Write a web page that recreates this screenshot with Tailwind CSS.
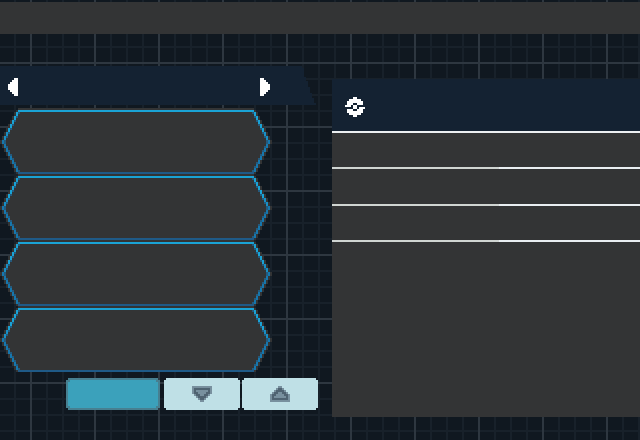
<!DOCTYPE html>
<html lang="en">
<head>
<meta charset="utf-8">
<title>Panels</title>
<script src="https://cdn.jsdelivr.net/npm/@tailwindcss/browser@4"></script>
</head>
<body class="w-[640px] h-[440px] overflow-hidden bg-[#101820]">
<div class="relative w-[640px] h-[440px] overflow-hidden">
  <svg class="absolute inset-0" width="640" height="440" shape-rendering="crispEdges" aria-hidden="true">
    <defs>
      <pattern id="minor" x="14" y="14" width="16" height="16" patternUnits="userSpaceOnUse"><path d="M0 0h16v2H2v14H0z" fill="#18212a"/></pattern>
      <pattern id="major" x="30" y="62" width="64" height="64" patternUnits="userSpaceOnUse"><path d="M0 0h64v2H2v62H0z" fill="#2e3740"/></pattern>
    </defs>
    <rect width="640" height="440" fill="url(#minor)"/>
    <rect width="640" height="440" fill="url(#major)"/>
  </svg>
  <div class="relative flex flex-col h-full pt-[2px]">
    <header class="h-8 shrink-0 bg-[#333435]"></header>
    <main class="flex flex-1">
      <section class="w-[332px] shrink-0 pt-8 flex flex-col">
        <div class="relative h-[39px] w-[316px] flex items-center">
          <svg class="absolute inset-0" width="316" height="39" shape-rendering="crispEdges"><path d="M0 0H302V2H304V11H306V15H308V21H310V27H312V32H314V37H316V39H0z" fill="#142232"/></svg>
          <button class="relative ml-2 mb-[-3px]" aria-label="Previous"><svg class="block" width="10" height="18" viewBox="0 0 5 9" shape-rendering="crispEdges" fill="#fff"><path d="M3 0H5V9H3V8H2V7H1V6H0V3H1V2H2V1H3z"/></svg></button>
          <button class="relative ml-[242px] mb-[-3px]" aria-label="Next"><svg class="block" width="10" height="18" viewBox="0 0 5 9" shape-rendering="crispEdges" fill="#fff"><path d="M0 0H2V1H3V2H4V3H5V6H4V7H3V8H2V9H0z"/></svg></button>
        </div>
        <div id="slots" class="mt-[3px] flex flex-col h-[264px]"></div>
        <div class="flex mt-[6px] ml-[66px]">
          <button class="block" aria-label="Select"><svg class="block" width="94" height="32" viewBox="0 0 47 16" shape-rendering="crispEdges"><path d="M1 0H46V1H47V15H46V16H1V15H0V1H1z" fill="#477f90"/><path d="M2 1H45V2H46V14H45V15H2V14H1V2H2z" fill="#3ba1bb"/></svg></button>
          <button class="ml-1 block" aria-label="Down"><svg class="block" width="76" height="32" viewBox="0 0 38 16" shape-rendering="crispEdges"><path d="M1 0H37V1H38V15H37V16H1V15H0V1H1z" fill="#bfe0e6"/><g id="tri" transform="translate(14 4)"><path d="M0 0H10V4H9V5H8V6H7V7H6V8H4V7H3V6H2V5H1V4H0z" fill="#78909e"/><path fill-rule="evenodd" d="M1 1H9V4H8V5H7V6H6V7H4V6H3V5H2V4H1zM2 2V3H3V4H4V5H6V4H7V3H8V2z" fill="#4f6371"/></g></svg></button>
          <button class="ml-[2px] block" aria-label="Up"><svg class="block" width="76" height="32" viewBox="0 0 38 16" shape-rendering="crispEdges"><path d="M1 0H37V1H38V15H37V16H1V15H0V1H1z" fill="#bfe0e6"/><use href="#tri" transform="translate(0 16) scale(1 -1)"/></svg></button>
        </div>
      </section>
      <section class="flex-1 mt-[45px] h-[338px] bg-[#333435] flex flex-col">
        <div class="h-[52px] shrink-0 bg-[#142232] pl-[13px] pt-[18px]">
          <svg class="block" width="20" height="20" viewBox="0 0 10 10" shape-rendering="crispEdges" fill="#fff"><path d="M4 0H6V1H8V2H9V4H6V3H4V4H3V5H0V4H1V2H2V1H4zM4 4H6V6H4zM6 10H4V9H2V8H1V6H4V7H6V6H7V5H10V6H9V8H8V9H6z"/></svg>
        </div>
        <div class="h-[2px] shrink-0 bg-[#eceff1]"></div>
        <div class="mt-[34px] h-[2px] shrink-0 flex"><i class="w-[167px] bg-[#d0d5d2]"></i><i class="flex-1 bg-[#e9eef2]"></i></div>
        <div class="mt-[35px] h-[2px] shrink-0 flex"><i class="w-[167px] bg-[#d0d5d2]"></i><i class="flex-1 bg-[#e9eef2]"></i></div>
        <div class="mt-[34px] h-[2px] shrink-0 flex"><i class="w-[167px] bg-[#d0d5d2]"></i><i class="flex-1 bg-[#e9eef2]"></i></div>
      </section>
    </main>
  </div>
</div>
<script>
// Each slot is a pixel-art hexagon on a 2px grid; row 0 is the backing row above its top edge.
const px = (x, y, w, c) => `<rect x="${x}" y="${y}" width="${w}" height="1" fill="${c}"/>`;
let art = '';
for (let r = 0; r < 32; r++) {
  const c = r <= 16 ? 9 - Math.ceil(r / 2) : Math.min(9, 1 + Math.ceil((r - 16) / 2));
  const edge = r < 11 ? '#1aa3d5' : r < 15 ? '#188fc4' : '#1677ad';
  const y = r + 1;
  if (r === 0) { art += px(9, 0, 118, '#333435') + px(8, y, 120, '#333435') + px(9, y, 118, '#1aa3d5'); continue; }
  if (r === 31) { art += px(8, y, 120, '#333435') + px(9, y, 118, '#1f5a87'); continue; }
  art += px(c - 1, y, 138 - 2 * c, '#333435') + px(c, y, 1, edge) + px(135 - c, y, 1, edge);
  const inner = r < 16 ? r % 2 === 1 : r % 2 === 0;
  if (inner) art += px(c + 1, y, 1, '#245a7d') + px(134 - c, y, 1, '#245a7d');
}
document.getElementById('slots').innerHTML = Array(4).fill(
  `<svg class="block shrink-0" width="272" height="66" viewBox="0 0 136 33" shape-rendering="crispEdges">${art}</svg>`).join('');
</script>
</body>
</html>
